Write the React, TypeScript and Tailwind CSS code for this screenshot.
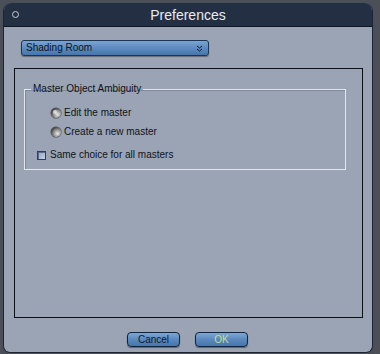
const Radio = ({ checked }: { checked?: boolean }) => (
  <span className="relative w-[10px] h-[10px] rounded-full bg-[radial-gradient(circle_at_65%_65%,#e8e8e8_0%,#8a8a8a_45%,#2a2a2a_80%)] shadow-[0_0_0_0.5px_#444]">
    {checked && <span className="absolute left-[2px] top-[2px] w-[4px] h-[4px] rounded-full bg-[#f4f4f4] opacity-70" />}
  </span>
)

const App = () => {
  return (
    <div className="w-[380px] h-[354px] bg-[#4b4f57] pt-[3px] pl-[3px] font-['Liberation_Sans',Arial,sans-serif]">
      <div className="w-[370px] h-[350px] flex flex-col bg-[#9ba4b4] rounded-t-[8px] rounded-b-[7px] border-b border-r border-l border-[#1c2433] overflow-hidden">
        {/* title bar */}
        <div className="h-[24px] shrink-0 bg-[#232f42] border-b border-[#0e1520] flex items-center relative">
          <span className="absolute left-[8px] top-[8px] w-[7px] h-[7px] rounded-full border-[1.5px] border-[#c9ced6]" />
          <span className="flex-1 text-center text-[14px] text-[#e9ecf1] leading-none pt-[1px]">Preferences</span>
        </div>

        <div className="flex-1 flex flex-col">
          {/* dropdown */}
          <div className="mt-[13px] ml-[17px] w-[188px] h-[16px] rounded-[3px] border border-[#1d3552] bg-gradient-to-b from-[#7ba4d2] via-[#5d8bc0] to-[#4676ad] shadow-[0_1px_1px_rgba(0,0,0,0.35)] flex items-center px-[4px]">
            <span className="flex-1 text-[10px] text-[#0b1420] leading-none">Shading Room</span>
            <svg width="7" height="7" viewBox="0 0 7 7" className="mr-[1px]">
              <path d="M1 1 L3.5 3 L6 1 M1 4 L3.5 6 L6 4" stroke="#101820" strokeWidth="1" fill="none" />
            </svg>
          </div>

          {/* panel */}
          <div className="mt-[12px] ml-[10px] mr-[9px] h-[250px] border border-[#0c0f14] pt-[15px] pl-[9px] pr-[16px]">
            <fieldset className="border border-[#e2e7ef] shadow-[inset_1px_1px_0_#7f8898] h-[86px] pl-[6px] pr-[10px] pt-[10px] m-0">
              <legend className="text-[10px] text-[#0e131c] px-[2px] leading-none">Master Object Ambiguity</legend>
              <div className="flex flex-col pl-[6px]">
                <label className="flex items-center gap-[3px] h-[18px] pl-[14px]">
                  <Radio checked />
                  <span className="text-[10px] text-[#0e131c] leading-none">Edit the master</span>
                </label>
                <label className="flex items-center gap-[3px] h-[19px] pl-[14px] pt-[1px]">
                  <Radio />
                  <span className="text-[10px] text-[#0e131c] leading-none">Create a new master</span>
                </label>
                <label className="flex items-center gap-[4px] h-[26px] pt-[2px]">
                  <span className="w-[9px] h-[9px] border border-[#2b3f60] bg-[linear-gradient(135deg,#8fa3c0,#c9d3e2)] shadow-[inset_1px_1px_0_#5a6d8c]" />
                  <span className="text-[10px] text-[#0e131c] leading-none">Same choice for all masters</span>
                </label>
              </div>
            </fieldset>
          </div>

          {/* buttons */}
          <div className="mt-[14px] flex justify-center gap-[15px] pr-[1px]">
            <button className="w-[53px] h-[15px] rounded-[4px] border border-[#13233b] bg-gradient-to-b from-[#7ea6d2] via-[#5b89be] to-[#4675ab] shadow-[0_1px_1px_rgba(0,0,0,0.4)] text-[10px] text-[#0f1824] leading-none">
              Cancel
            </button>
            <button className="w-[53px] h-[15px] rounded-[4px] border border-[#13233b] bg-gradient-to-b from-[#7ea6d2] via-[#5b89be] to-[#4675ab] shadow-[0_1px_1px_rgba(0,0,0,0.4)] text-[10px] text-[#c9dc8c] leading-none">
              OK
            </button>
          </div>
        </div>
      </div>
    </div>
  )
}

export default App
